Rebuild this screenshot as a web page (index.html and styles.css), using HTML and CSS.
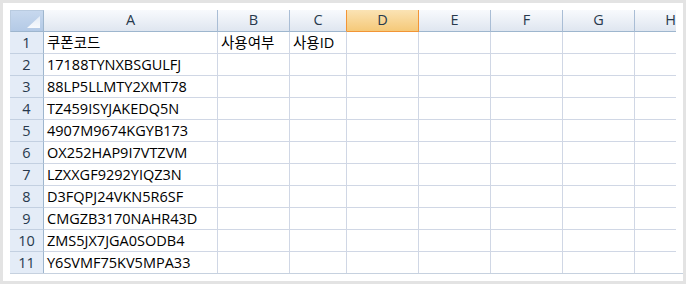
FILE: index.html
```html
<!DOCTYPE html>
<html lang="ko">
<head>
<meta charset="utf-8">
<link rel="stylesheet" href="styles.css">
</head>
<body>
<div class="frame">
  <div class="sheet">
    <div class="wrap">
      <div class="clip">
        <div class="grid">
          <div class="corner"></div>
          <div class="ch">A</div><div class="ch">B</div><div class="ch pre-sel">C</div><div class="ch sel">D</div><div class="ch">E</div><div class="ch">F</div><div class="ch">G</div><div class="ch">H</div>

          <div class="rh">1</div><div class="c">쿠폰코드</div><div class="c">사용여부</div><div class="c">사용ID</div><div class="c"></div><div class="c"></div><div class="c"></div><div class="c"></div><div class="c"></div>
          <div class="rh">2</div><div class="c">17188TYNXBSGULFJ</div><div class="c"></div><div class="c"></div><div class="c"></div><div class="c"></div><div class="c"></div><div class="c"></div><div class="c"></div>
          <div class="rh">3</div><div class="c">88LP5LLMTY2XMT78</div><div class="c"></div><div class="c"></div><div class="c"></div><div class="c"></div><div class="c"></div><div class="c"></div><div class="c"></div>
          <div class="rh">4</div><div class="c">TZ459ISYJAKEDQ5N</div><div class="c"></div><div class="c"></div><div class="c"></div><div class="c"></div><div class="c"></div><div class="c"></div><div class="c"></div>
          <div class="rh">5</div><div class="c">4907M9674KGYB173</div><div class="c"></div><div class="c"></div><div class="c"></div><div class="c"></div><div class="c"></div><div class="c"></div><div class="c"></div>
          <div class="rh">6</div><div class="c">OX252HAP9I7VTZVM</div><div class="c"></div><div class="c"></div><div class="c"></div><div class="c"></div><div class="c"></div><div class="c"></div><div class="c"></div>
          <div class="rh">7</div><div class="c">LZXXGF9292YIQZ3N</div><div class="c"></div><div class="c"></div><div class="c"></div><div class="c"></div><div class="c"></div><div class="c"></div><div class="c"></div>
          <div class="rh">8</div><div class="c">D3FQPJ24VKN5R6SF</div><div class="c"></div><div class="c"></div><div class="c"></div><div class="c"></div><div class="c"></div><div class="c"></div><div class="c"></div>
          <div class="rh">9</div><div class="c">CMGZB3170NAHR43D</div><div class="c"></div><div class="c"></div><div class="c"></div><div class="c"></div><div class="c"></div><div class="c"></div><div class="c"></div>
          <div class="rh">10</div><div class="c">ZMS5JX7JGA0SODB4</div><div class="c"></div><div class="c"></div><div class="c"></div><div class="c"></div><div class="c"></div><div class="c"></div><div class="c"></div>
          <div class="rh last">11</div><div class="c last">Y6SVMF75KV5MPA33</div><div class="c last"></div><div class="c last"></div><div class="c last"></div><div class="c last"></div><div class="c last"></div><div class="c last"></div><div class="c last"></div>
        </div>
      </div>
    </div>
  </div>
</div>
</body>
</html>
```

FILE: styles.css
```css
html, body {
  margin: 0;
  padding: 0;
  background: #e3e3e3;
}

.frame {
  width: 686px;
  height: 284px;
  box-sizing: border-box;
  padding: 3px;
  background: #e3e3e3;
}

.sheet {
  height: 278px;
  box-sizing: border-box;
  background: #ffffff;
  padding: 7px 0 0 7px;
  font-family: "Open Sans", "Noto Sans CJK KR", sans-serif;
  font-size: 14.5px;
  color: #000;
}

.wrap {
  border-bottom: 1px solid #c6d1df;
}

.clip {
  width: 666px;
  overflow: hidden;
}

.grid {
  display: grid;
  grid-template-columns: 34px 174px 72px 57px 72px 72px 72px 72px 72px;
  grid-template-rows: repeat(11, 22px) 21px;
  width: max-content;
}

.grid > div {
  box-sizing: border-box;
  min-width: 0;
  overflow: hidden;
  white-space: nowrap;
}

.corner {
  position: relative;
  background: linear-gradient(#c7d8ee, #b4cae6);
  border: 1px solid #9eb6ce;
  border-top-color: #b9cbe0;
  border-left-color: #b9cbe0;
}

.corner::after {
  content: "";
  position: absolute;
  right: 3px;
  bottom: 3px;
  width: 13px;
  height: 12px;
  background: linear-gradient(#e4ecf6, #f7f9fc);
  clip-path: polygon(100% 0, 100% 100%, 0 100%);
}

.ch {
  display: flex;
  align-items: center;
  justify-content: center;
  line-height: 20px;
  padding-bottom: 1px;
  color: #27394d;
  background: linear-gradient(#f8fafd, #dfe6f0);
  border-right: 1px solid #a9bdd5;
  border-bottom: 1px solid #9eb6ce;
}

.ch.pre-sel {
  border-right-color: #f29536;
}

.ch.sel {
  background: linear-gradient(#fbe3b4, #f5c979);
  border-right-color: #f29536;
  border-bottom-color: #f29536;
}

.rh {
  display: flex;
  align-items: flex-end;
  justify-content: center;
  line-height: 20px;
  color: #27394d;
  background: #e4ecf7;
  border-right: 1px solid #9eb6ce;
  border-bottom: 1px solid #c3d0e1;
}

.c {
  display: flex;
  align-items: flex-end;
  line-height: 20px;
  padding-left: 3px;
  background: #fff;
  border-right: 1px solid #d0d7e5;
  border-bottom: 1px solid #d0d7e5;
}

.rh.last,
.c.last {
  border-bottom: none;
}
```
